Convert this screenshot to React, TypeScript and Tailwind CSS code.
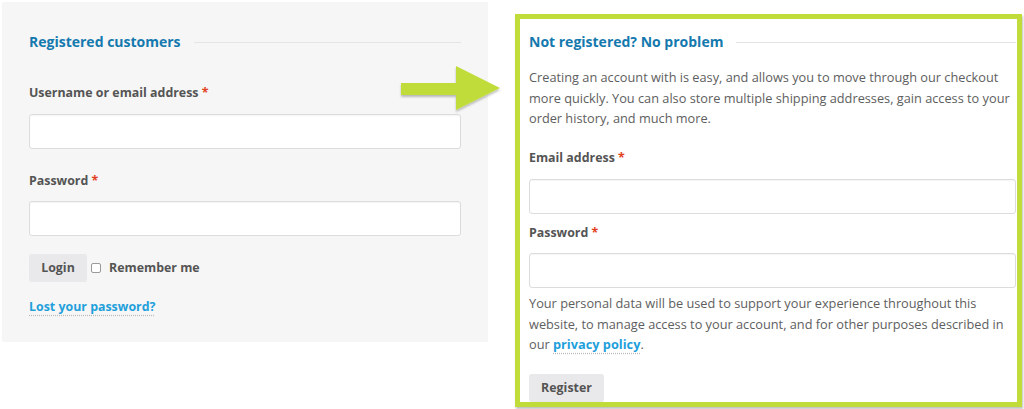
import React from "react";

const font = { fontFamily: '"Open Sans", "Noto Sans", sans-serif' };

function Title({ children }: { children: React.ReactNode }) {
  return (
    <div className="flex items-center h-[20px]">
      <span className="text-[14px] font-bold text-[#1479ae] whitespace-nowrap leading-[20px]">{children}</span>
      <div className="flex-1 ml-[13px] h-px bg-[#e4e4e4]" />
    </div>
  );
}

function Label({ children }: { children: React.ReactNode }) {
  return (
    <div className="h-[20px] leading-[21px] text-[12.4px] font-bold text-[#545454]">
      {children} <span className="text-[#e2401c]">*</span>
    </div>
  );
}

function Input({ className = "" }: { className?: string }) {
  return (
    <div className={"h-[35px] bg-white border border-[#dcdcdc] rounded-[3px] shadow-[inset_0_1px_1px_rgba(0,0,0,0.04)] " + className} />
  );
}

export default function App() {
  return (
    <div style={font} className="relative w-[1024px] h-[409px] bg-white overflow-hidden flex items-start">
      {/* Left panel */}
      <div className="ml-[2px] mt-[2px] w-[486px] h-[340px] bg-[#f6f6f6] px-[27px] pt-[30px] flex flex-col">
        <Title>Registered customers</Title>
        <div className="mt-[30px]"><Label>Username or email address</Label></div>
        <Input className="mt-[12px]" />
        <div className="mt-[21px]"><Label>Password</Label></div>
        <Input className="mt-[11px]" />
        <div className="mt-[18px] flex items-center h-[28px]">
          <div className="h-[28px] w-[58px] bg-[#e9e8ea] rounded-[3px] flex items-center justify-center text-[12.4px] font-bold text-[#545454]">Login</div>
          <div className="ml-[4px] w-[10px] h-[10px] border border-[#9a9a9a] rounded-[2px] bg-white" />
          <span className="ml-[8px] text-[12.4px] font-bold text-[#545454]">Remember me</span>
        </div>
        <div className="mt-[13px] h-[20px] leading-[20px]">
          <span className="text-[12.4px] font-bold text-[#1ea0db] underline decoration-dotted decoration-[#b9b9b9] underline-offset-[4px]">Lost your password?</span>
        </div>
      </div>

      {/* Right panel */}
      <div className="ml-[27px] mt-[14px] w-[507px] h-[393px] border-[5px] border-[#c0dc3b] shadow-[1px_2px_2px_rgba(0,0,0,0.25)] overflow-hidden pl-[9px] pr-[1px] pt-[13px] flex flex-col bg-white">
        <Title>Not registered? No problem</Title>
        <p className="mt-[15px] text-[12.75px] leading-[20.5px] text-[#5e5e5e]">
          Creating an account with is easy, and allows you to move through our checkout more quickly. You can also store multiple shipping addresses, gain access to your order history, and much more.
        </p>
        <div className="mt-[18.5px]"><Label>Email address</Label></div>
        <Input className="mt-[12px]" />
        <div className="mt-[8px]"><Label>Password</Label></div>
        <Input className="mt-[11px]" />
        <p className="mt-[5px] text-[12.75px] leading-[20.5px] text-[#5e5e5e]">
          Your personal data will be used to support your experience throughout this website, to manage access to your account, and for other purposes described in our <a className="font-bold text-[#1ea0db] underline decoration-dotted decoration-[#b9b9b9] underline-offset-[4px]">privacy policy</a>.
        </p>
        <div className="mt-[19.5px] shrink-0 h-[28px] w-[75px] bg-[#e9e8ea] rounded-[3px] flex items-center justify-center text-[12.4px] font-bold text-[#545454]">Register</div>
      </div>

      {/* Arrow overlay */}
      <svg className="absolute left-[398px] top-[64px]" width="106" height="50" viewBox="0 0 106 50">
        <defs>
          <filter id="sh" x="-10%" y="-10%" width="130%" height="140%">
            <feDropShadow dx="0" dy="2" stdDeviation="1.2" floodColor="#000" floodOpacity="0.25" />
          </filter>
        </defs>
        <path d="M3 19 L58 19 L58 2 L102 24 L58 46 L58 31 L3 31 Z" fill="#c0dc3b" filter="url(#sh)" />
      </svg>
    </div>
  );
}
